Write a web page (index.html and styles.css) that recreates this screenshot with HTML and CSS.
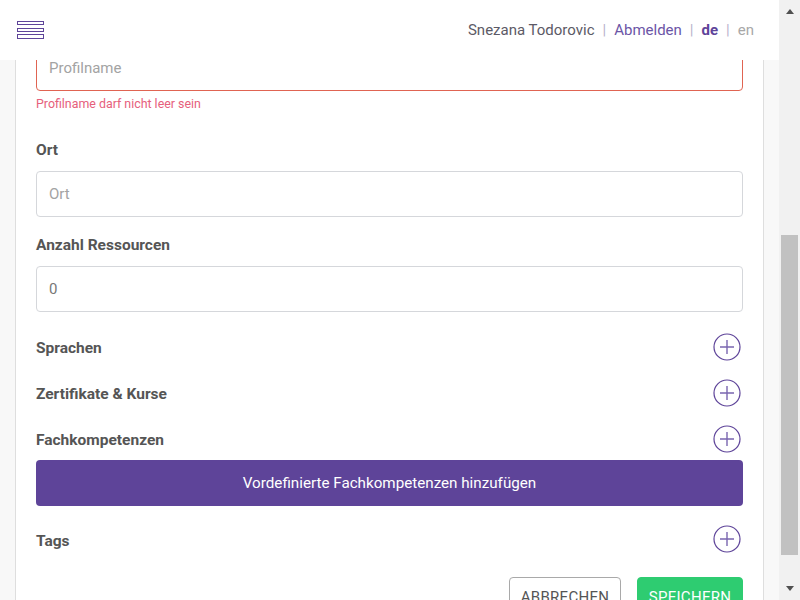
FILE: index.html
```html
<!DOCTYPE html>
<html lang="de">
<head>
<meta charset="utf-8">
<title>Profil bearbeiten</title>
<link rel="stylesheet" href="styles.css">
</head>
<body>
<header class="topbar">
  <button class="menu-btn" aria-label="Menü">
    <svg width="28" height="19" viewBox="0 0 28 19">
      <rect x="0.5" y="0.5" width="26" height="3" fill="#fff" stroke="#5e4499" stroke-width="1"/>
      <rect x="0.5" y="7.5" width="26" height="3" fill="#fff" stroke="#5e4499" stroke-width="1"/>
      <rect x="0.5" y="13.5" width="26" height="4" fill="#fff" stroke="#5e4499" stroke-width="1"/>
    </svg>
  </button>
  <nav class="usernav">
    <span class="user">Snezana Todorovic</span>
    <span class="sep">|</span>
    <a class="logout">Abmelden</a>
    <span class="sep">|</span>
    <a class="lang active">de</a>
    <span class="sep">|</span>
    <a class="lang">en</a>
  </nav>
</header>

<div class="scrollbar" aria-hidden="true">
  <div class="sb-btn"><span class="tri tri-up"></span></div>
  <div class="sb-track"><div class="sb-thumb" style="margin-top: 214px; height: 320px;"></div></div>
  <div class="sb-btn"><span class="tri tri-down"></span></div>
</div>

<main class="page">
  <section class="card">
    <div class="group group-error">
      <div class="input input-error"><span class="placeholder">Profilname</span></div>
      <div class="error-msg">Profilname darf nicht leer sein</div>
    </div>
    <div class="group">
      <label class="label">Ort</label>
      <div class="input"><span class="placeholder">Ort</span></div>
    </div>
    <div class="group">
      <label class="label">Anzahl Ressourcen</label>
      <div class="input"><span class="value">0</span></div>
    </div>

    <div class="row row-first">
      <span class="label">Sprachen</span>
      <button class="add-btn" aria-label="Hinzufügen">
        <svg width="28" height="28" viewBox="0 0 28 28"><circle cx="14" cy="14" r="13" fill="none" stroke="#5e4499" stroke-width="1.2"/><path d="M7 14H21M14 7V21" stroke="#7a66b0" stroke-width="1.4"/></svg>
      </button>
    </div>
    <div class="row">
      <span class="label">Zertifikate &amp; Kurse</span>
      <button class="add-btn" aria-label="Hinzufügen">
        <svg width="28" height="28" viewBox="0 0 28 28"><circle cx="14" cy="14" r="13" fill="none" stroke="#5e4499" stroke-width="1.2"/><path d="M7 14H21M14 7V21" stroke="#7a66b0" stroke-width="1.4"/></svg>
      </button>
    </div>
    <div class="row">
      <span class="label">Fachkompetenzen</span>
      <button class="add-btn" aria-label="Hinzufügen">
        <svg width="28" height="28" viewBox="0 0 28 28"><circle cx="14" cy="14" r="13" fill="none" stroke="#5e4499" stroke-width="1.2"/><path d="M7 14H21M14 7V21" stroke="#7a66b0" stroke-width="1.4"/></svg>
      </button>
    </div>
    <button class="primary-wide">Vordefinierte Fachkompetenzen hinzufügen</button>
    <div class="row row-tags">
      <span class="label">Tags</span>
      <button class="add-btn add-btn-up" aria-label="Hinzufügen">
        <svg width="28" height="28" viewBox="0 0 28 28"><circle cx="14" cy="14" r="13" fill="none" stroke="#5e4499" stroke-width="1.2"/><path d="M7 14H21M14 7V21" stroke="#7a66b0" stroke-width="1.4"/></svg>
      </button>
    </div>

    <div class="actions">
      <button class="btn btn-cancel">Abbrechen</button>
      <button class="btn btn-save">Speichern</button>
    </div>
  </section>
</main>
</body>
</html>
```

FILE: styles.css
```css
* { box-sizing: border-box; }

html, body {
  margin: 0;
  padding: 0;
}

body {
  background: #f8f8f8;
  font-family: Roboto, "Liberation Sans", Arial, sans-serif;
  font-size: 15px;
  color: #555;
  height: 600px;
  overflow: hidden;
}

button {
  font-family: inherit;
  cursor: pointer;
}

/* fixed header over the scrolled content */
.topbar {
  position: fixed;
  top: 0;
  left: 0;
  right: 21px;
  height: 60px;
  background: #fff;
  display: flex;
  align-items: center;
  justify-content: space-between;
  padding: 0 25px 0 17px;
  z-index: 10;
}

.menu-btn {
  border: 0;
  background: none;
  padding: 0;
  margin-top: 1px;
  display: flex;
}

.usernav {
  display: flex;
  align-items: center;
  font-size: 15px;
  line-height: 20px;
}

.user { color: #5c5a66; }
.sep { color: #b9b2cc; margin: 0 8px; }
.logout { color: #6b55a6; }
.lang { color: #a8a8a8; }
.lang.active { color: #5e4499; font-weight: 700; }

/* window scrollbar */
.scrollbar {
  position: fixed;
  top: 0;
  right: 0;
  bottom: 0;
  width: 21px;
  background: #f1f1f1;
  display: flex;
  flex-direction: column;
  z-index: 11;
}

.sb-btn {
  height: 21px;
  display: flex;
  align-items: center;
  justify-content: center;
}

.sb-track {
  flex: 1;
  padding: 0 2px;
}

.sb-thumb {
  background: #c1c1c1;
}

.tri {
  width: 0;
  height: 0;
  border-left: 4.5px solid transparent;
  border-right: 4.5px solid transparent;
}

.tri-up { border-bottom: 5px solid #505050; margin-top: 2px; }
.tri-down { border-top: 5px solid #505050; margin-top: -2px; }

.page {
  padding: 0 36px 0 15px;
}

.card {
  background: #fff;
  border: 1px solid #dedede;
  border-top: 0;
  padding: 45px 20px 20px;
}

.group { margin-bottom: 18px; }
.group-error { margin-bottom: 28px; }

.label {
  display: block;
  font-weight: 700;
  font-size: 15.5px;
  line-height: 20px;
  color: #555;
}

.group .label { margin-bottom: 11px; }

.input {
  height: 46px;
  border: 1px solid #d5d7db;
  border-radius: 4px;
  padding: 0 12px;
  display: flex;
  align-items: center;
  font-size: 15px;
}

.input-error { border-color: #e06452; }

.placeholder { color: #a3a3a3; }
.value { color: #777; }

.error-msg {
  margin-top: 5px;
  font-size: 12.4px;
  line-height: 16px;
  color: #e6607c;
}

.row {
  height: 36px;
  display: flex;
  align-items: center;
  justify-content: space-between;
  margin-top: 10px;
}

.row .label { margin-top: -1px; }

.row-first { margin-top: 17px; }
.row-tags { margin-top: 17px; }

.add-btn {
  border: 0;
  background: none;
  padding: 0;
  margin: -3px 2px 0 0;
  display: flex;
}

.add-btn-up { margin-top: -5px; }

.primary-wide {
  display: block;
  width: 100%;
  height: 46px;
  margin-top: 2px;
  border: 0;
  border-radius: 4px;
  background: #5e4499;
  color: #fff;
  font-size: 15.2px;
}

.actions {
  display: flex;
  justify-content: flex-end;
  gap: 16px;
  margin-top: 18px;
}

.btn {
  height: 40px;
  border-radius: 4px;
  font-size: 15px;
  text-transform: uppercase;
  letter-spacing: 0.3px;
  padding: 0;
}

.btn-cancel {
  width: 112px;
  background: #fff;
  border: 1px solid #a9a9a9;
  color: #555;
}

.btn-save {
  width: 106px;
  background: #2ecc71;
  border: 1px solid #2ecc71;
  color: #fff;
}
```
